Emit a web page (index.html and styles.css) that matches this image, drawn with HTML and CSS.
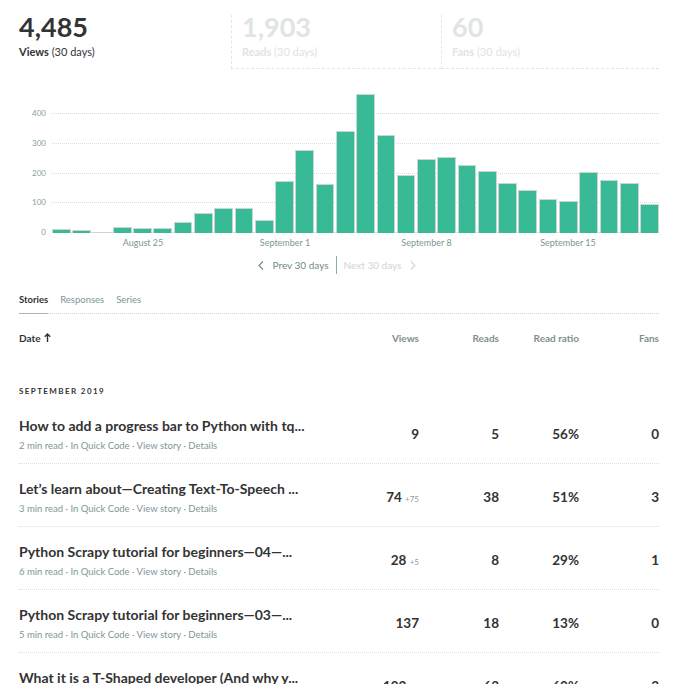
FILE: index.html
```html
<!DOCTYPE html>
<html>
<head>
<meta charset="utf-8">
<link rel="stylesheet" href="styles.css">
</head>
<body>
<div class="page">
  <div class="stats">
    <div class="stat stat-views">
      <div class="stat-num">4,485</div>
      <div class="stat-label"><b>Views</b> (30 days)</div>
    </div>
    <div class="stat stat-reads faded">
      <div class="stat-num">1,903</div>
      <div class="stat-label"><b>Reads</b> (30 days)</div>
    </div>
    <div class="stat stat-fans faded">
      <div class="stat-num">60</div>
      <div class="stat-label"><b>Fans</b> (30 days)</div>
    </div>
  </div>

  <div class="chart">
    <div class="plot">
      <div class="grid-line" style="bottom:29.75px"><span>100</span></div>
      <div class="grid-line" style="bottom:59.5px"><span>200</span></div>
      <div class="grid-line" style="bottom:89.25px"><span>300</span></div>
      <div class="grid-line" style="bottom:119px"><span>400</span></div>
      <div class="grid-line base"><span>0</span></div>
      <div class="bars">
        <div class="bar" style="height:4px"></div>
        <div class="bar" style="height:3.3px"></div>
        <div class="bar" style="height:1.3px"></div>
        <div class="bar" style="height:6px"></div>
        <div class="bar" style="height:4.8px"></div>
        <div class="bar" style="height:4.8px"></div>
        <div class="bar" style="height:11px"></div>
        <div class="bar" style="height:20px"></div>
        <div class="bar" style="height:25.3px"></div>
        <div class="bar" style="height:25.3px"></div>
        <div class="bar" style="height:13px"></div>
        <div class="bar" style="height:52px"></div>
        <div class="bar" style="height:82.6px"></div>
        <div class="bar" style="height:49px"></div>
        <div class="bar" style="height:102px"></div>
        <div class="bar" style="height:139px"></div>
        <div class="bar" style="height:97.6px"></div>
        <div class="bar" style="height:58.3px"></div>
        <div class="bar" style="height:73.6px"></div>
        <div class="bar" style="height:76.3px"></div>
        <div class="bar" style="height:67.6px"></div>
        <div class="bar" style="height:62.3px"></div>
        <div class="bar" style="height:49.6px"></div>
        <div class="bar" style="height:42.6px"></div>
        <div class="bar" style="height:34px"></div>
        <div class="bar" style="height:32px"></div>
        <div class="bar" style="height:60.6px"></div>
        <div class="bar" style="height:53px"></div>
        <div class="bar" style="height:50px"></div>
        <div class="bar" style="height:29.3px"></div>
      </div>
    </div>
    <div class="xaxis">
      <span class="xlabel" style="left:91px">August 25</span>
      <span class="xlabel" style="left:233px">September 1</span>
      <span class="xlabel" style="left:374.5px">September 8</span>
      <span class="xlabel" style="left:516px">September 15</span>
    </div>
  </div>

  <div class="pager">
    <span class="pager-prev">
      <svg width="6" height="9" viewBox="0 0 6 9"><polyline points="5,0.5 1,4.5 5,8.5" fill="none" stroke="currentColor" stroke-width="1.1"/></svg>
      Prev 30 days
    </span>
    <span class="pager-sep"></span>
    <span class="pager-next">
      Next 30 days
      <svg width="6" height="9" viewBox="0 0 6 9"><polyline points="1,0.5 5,4.5 1,8.5" fill="none" stroke="currentColor" stroke-width="1.1"/></svg>
    </span>
  </div>

  <div class="tabs">
    <span class="tab active">Stories</span>
    <span class="tab">Responses</span>
    <span class="tab">Series</span>
  </div>

  <div class="table-head row-grid">
    <div class="th th-date">Date
      <svg width="7" height="9" viewBox="0 0 7 9"><path d="M3.5 9V1.2M0.8 3.8L3.5 1 6.2 3.8" fill="none" stroke="currentColor" stroke-width="1.4"/></svg>
    </div>
    <div class="th">Views</div>
    <div class="th">Reads</div>
    <div class="th">Read ratio</div>
    <div class="th">Fans</div>
  </div>

  <div class="month">September 2019</div>

  <div class="story row-grid">
    <div class="story-main">
      <div class="story-title">How to add a progress bar to Python with tq...</div>
      <div class="story-meta">2 min read · In Quick Code · View story · Details</div>
    </div>
    <div class="val">9</div>
    <div class="val">5</div>
    <div class="val">56%</div>
    <div class="val">0</div>
  </div>

  <div class="story row-grid">
    <div class="story-main">
      <div class="story-title">Let’s learn about—Creating Text-To-Speech ...</div>
      <div class="story-meta">3 min read · In Quick Code · View story · Details</div>
    </div>
    <div class="val">74 <small>+75</small></div>
    <div class="val">38</div>
    <div class="val">51%</div>
    <div class="val">3</div>
  </div>

  <div class="story row-grid">
    <div class="story-main">
      <div class="story-title">Python Scrapy tutorial for beginners—04—...</div>
      <div class="story-meta">6 min read · In Quick Code · View story · Details</div>
    </div>
    <div class="val">28 <small>+5</small></div>
    <div class="val">8</div>
    <div class="val">29%</div>
    <div class="val">1</div>
  </div>

  <div class="story row-grid">
    <div class="story-main">
      <div class="story-title">Python Scrapy tutorial for beginners—03—...</div>
      <div class="story-meta">5 min read · In Quick Code · View story · Details</div>
    </div>
    <div class="val">137</div>
    <div class="val">18</div>
    <div class="val">13%</div>
    <div class="val">0</div>
  </div>

  <div class="story row-grid">
    <div class="story-main">
      <div class="story-title">What it is a T-Shaped developer (And why y...</div>
      <div class="story-meta">4 min read · In Quick Code · View story · Details</div>
    </div>
    <div class="val">103 <small>+8</small></div>
    <div class="val">62</div>
    <div class="val">60%</div>
    <div class="val">2</div>
  </div>
</div>
</body>
</html>
```

FILE: styles.css
```css
* { box-sizing: border-box; }
html, body { margin: 0; padding: 0; background: #fff; }
body {
  font-family: Lato, "Open Sans", sans-serif;
  color: #333;
  overflow: hidden;
}
.page {
  width: 688px;
  padding: 15px 29px 0 19px;
}

/* stats */
.stats { display: flex; }
.stat { height: 54px; }
.stat-views { width: 212px; }
.stat-reads { width: 210px; }
.stat-fans { width: 218px; }
.faded {
  padding-left: 10px;
  border-left: 1px dashed #e3e6e6;
  border-bottom: 1px dashed #e3e6e6;
}
.stat-num {
  font-size: 27px;
  line-height: 24px;
  font-weight: 700;
  color: #333;
}
.stat-label {
  margin-top: 6px;
  font-size: 11px;
  line-height: 14px;
  color: #333;
}
.faded .stat-num, .faded .stat-label { color: #dfe4e4; }

/* chart */
.chart { margin-top: 14px; padding-left: 33px; }
.plot { position: relative; height: 150px; }
.grid-line {
  position: absolute;
  left: 0; right: 0;
  border-top: 1px dotted #d6dcdc;
}
.grid-line.base { bottom: 0; border-top: 1px solid #d9dede; }
.grid-line span {
  position: absolute;
  right: calc(100% + 6px);
  top: -6px;
  font-size: 8px;
  line-height: 10px;
  color: #8a9c9c;
}
.bars {
  position: relative;
  display: flex;
  align-items: flex-end;
  gap: 1.6px;
  height: 100%;
}
.bar {
  flex: 1;
  background: #38ba96;
  border: 1px solid #c9d6d2;
  border-bottom: none;
}
.xaxis { position: relative; height: 20px; }
.xlabel {
  position: absolute;
  top: 0;
  transform: translateX(-50%);
  font-size: 9px;
  line-height: 20px;
  color: #7f9494;
  white-space: nowrap;
}

/* pager */
.pager {
  display: flex;
  justify-content: center;
  align-items: center;
  height: 24px;
  padding-right: 4px;
  font-size: 10px;
}
.pager svg { vertical-align: -1px; }
.pager-prev { color: #6f8a8a; }
.pager-prev svg { margin-right: 6px; }
.pager-next { color: #cdd6d6; }
.pager-next svg { margin-left: 6px; }
.pager-sep {
  width: 1px;
  height: 18px;
  background: #8eaaaa;
  margin: 0 7px;
}

/* tabs */
.tabs {
  display: flex;
  gap: 12px;
  margin-top: 16px;
  border-bottom: 1px dotted #d3d9d9;
}
.tab {
  font-size: 9.5px;
  line-height: 14px;
  padding-bottom: 6px;
  color: #7f9696;
}
.tab.active {
  font-weight: 700;
  color: #333;
  border-bottom: 1px solid #a9b6b6;
  margin-bottom: -1px;
}

/* table */
.row-grid {
  display: grid;
  grid-template-columns: 320px 80px 80px 80px 80px;
  align-items: center;
}
.table-head { margin-top: 17px; }
.th {
  font-size: 10px;
  line-height: 14px;
  font-weight: 700;
  color: #7f8f8f;
  text-align: right;
}
.th-date {
  text-align: left;
  color: #333;
}
.th-date svg { vertical-align: 0; margin-left: 1px; }
.month {
  margin-top: 40px;
  font-size: 8px;
  line-height: 12px;
  font-weight: 700;
  letter-spacing: 1.4px;
  text-transform: uppercase;
  color: #333;
}
.story {
  padding: 15px 0 11px;
  border-bottom: 1px dotted #d9dede;
}
.month + .story { margin-top: 4px; }
.story-title {
  font-size: 14px;
  line-height: 20px;
  font-weight: 700;
  color: #333;
  white-space: nowrap;
}
.story-meta {
  margin-top: 3px;
  font-size: 9.5px;
  line-height: 13px;
  color: #7f9696;
}
.val {
  text-align: right;
  font-size: 13.5px;
  font-weight: 700;
  color: #333;
  white-space: nowrap;
}
.val small {
  font-size: 8px;
  font-weight: 400;
  color: #8aa0a0;
}
```
